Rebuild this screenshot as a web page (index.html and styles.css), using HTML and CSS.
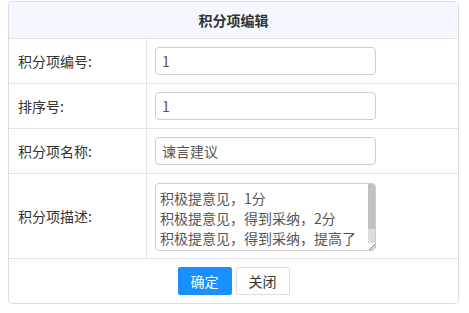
FILE: index.html
```html
<!DOCTYPE html>
<html lang="zh-CN">
<head>
    <meta charset="UTF-8">
    <meta name="viewport" content="width=device-width, initial-scale=1.0">
    <title>积分项编辑</title>
    <link rel="stylesheet" href="styles.css">
</head>
<body>
    <div class="panel">
        <div class="panel-header">积分项编辑</div>
        <div class="form-row">
            <div class="form-label">积分项编号:</div>
            <div class="form-field"><input type="text" class="input-field" value="1"></div>
        </div>
        <div class="form-row">
            <div class="form-label">排序号:</div>
            <div class="form-field"><input type="text" class="input-field" value="1"></div>
        </div>
        <div class="form-row">
            <div class="form-label">积分项名称:</div>
            <div class="form-field"><input type="text" class="input-field" value="谏言建议"></div>
        </div>
        <div class="form-row">
            <div class="form-label">积分项描述:</div>
            <div class="form-field field-tall">
                <div class="text-wrap">
                    <textarea class="text-field">积极提意见，1分
积极提意见，得到采纳，2分
积极提意见，得到采纳，提高了工作效率，3分</textarea>
                    <div class="scrollbar">
                        <div class="scroll-thumb"></div>
                        <div class="scroll-track"></div>
                        <div class="resizer"></div>
                    </div>
                </div>
            </div>
        </div>
        <div class="panel-footer">
            <button class="btn btn-primary">确定</button>
            <button class="btn btn-default">关闭</button>
        </div>
    </div>
</body>
</html>
```

FILE: styles.css
```css
body {
    margin: 1px 10px 0 8px;
    font-family: "Noto Sans CJK SC", "Liberation Sans", sans-serif;
    font-size: 14px;
    color: #333;
    background: #fff;
}

.panel {
    border: 1px solid #ddd;
    border-radius: 4px;
    overflow: hidden;
}

.panel-header {
    height: 36px;
    line-height: 36px;
    text-align: center;
    font-weight: bold;
    background-color: #f3f8fe;
    border-bottom: 1px solid #e3e3e3;
}

.form-row {
    display: grid;
    grid-template-columns: 138px 1fr;
    border-bottom: 1px solid #e3e3e3;
}

.form-label {
    display: flex;
    align-items: center;
    padding: 0 9px;
    border-right: 1px solid #e3e3e3;
}

.form-field {
    padding: 8px 8px;
}

.field-tall {
    padding: 9px 8px 7px;
}

.input-field {
    display: block;
    box-sizing: border-box;
    width: 221px;
    height: 28px;
    margin: 0;
    padding: 0 6px;
    border: 1px solid #ccc;
    border-radius: 4px;
    font-family: inherit;
    font-size: 14px;
    color: #555;
    outline: none;
}

.text-wrap {
    position: relative;
    width: 221px;
    height: 68px;
}

.text-field {
    display: block;
    box-sizing: border-box;
    width: 100%;
    height: 100%;
    margin: 0;
    padding: 4px 9px 4px 4px;
    border: 1px solid #ccc;
    border-radius: 4px;
    font-family: inherit;
    font-size: 14px;
    line-height: 20px;
    color: #555;
    outline: none;
    resize: none;
    overflow: hidden;
}

/* fake scrollbar drawn over the textarea */
.scrollbar {
    position: absolute;
    top: 1px;
    right: 1px;
    bottom: 1px;
    width: 7px;
    display: flex;
    flex-direction: column;
    border-top-right-radius: 3px;
    overflow: hidden;
}

.scroll-thumb {
    height: 45px;
    background: #c1c1c1;
}

.scroll-track {
    flex: 1;
    background: #dcdcdc;
}

.resizer {
    height: 7px;
    background: linear-gradient(135deg, #fff 55%, #999 56%, #999 64%, #fff 65%, #fff 75%, #999 76%, #999 84%, #fff 85%);
}

.panel-footer {
    display: flex;
    justify-content: center;
    gap: 4px;
    padding: 8px 0;
}

.btn {
    box-sizing: border-box;
    width: 54px;
    height: 28px;
    padding: 0;
    border-radius: 2px;
    font-family: inherit;
    font-size: 14px;
    cursor: pointer;
}

.btn-primary {
    background-color: #1890ff;
    border: 1px solid #1890ff;
    color: #fff;
}

.btn-default {
    background-color: #fff;
    border: 1px solid #ddd;
    color: #333;
}
```
